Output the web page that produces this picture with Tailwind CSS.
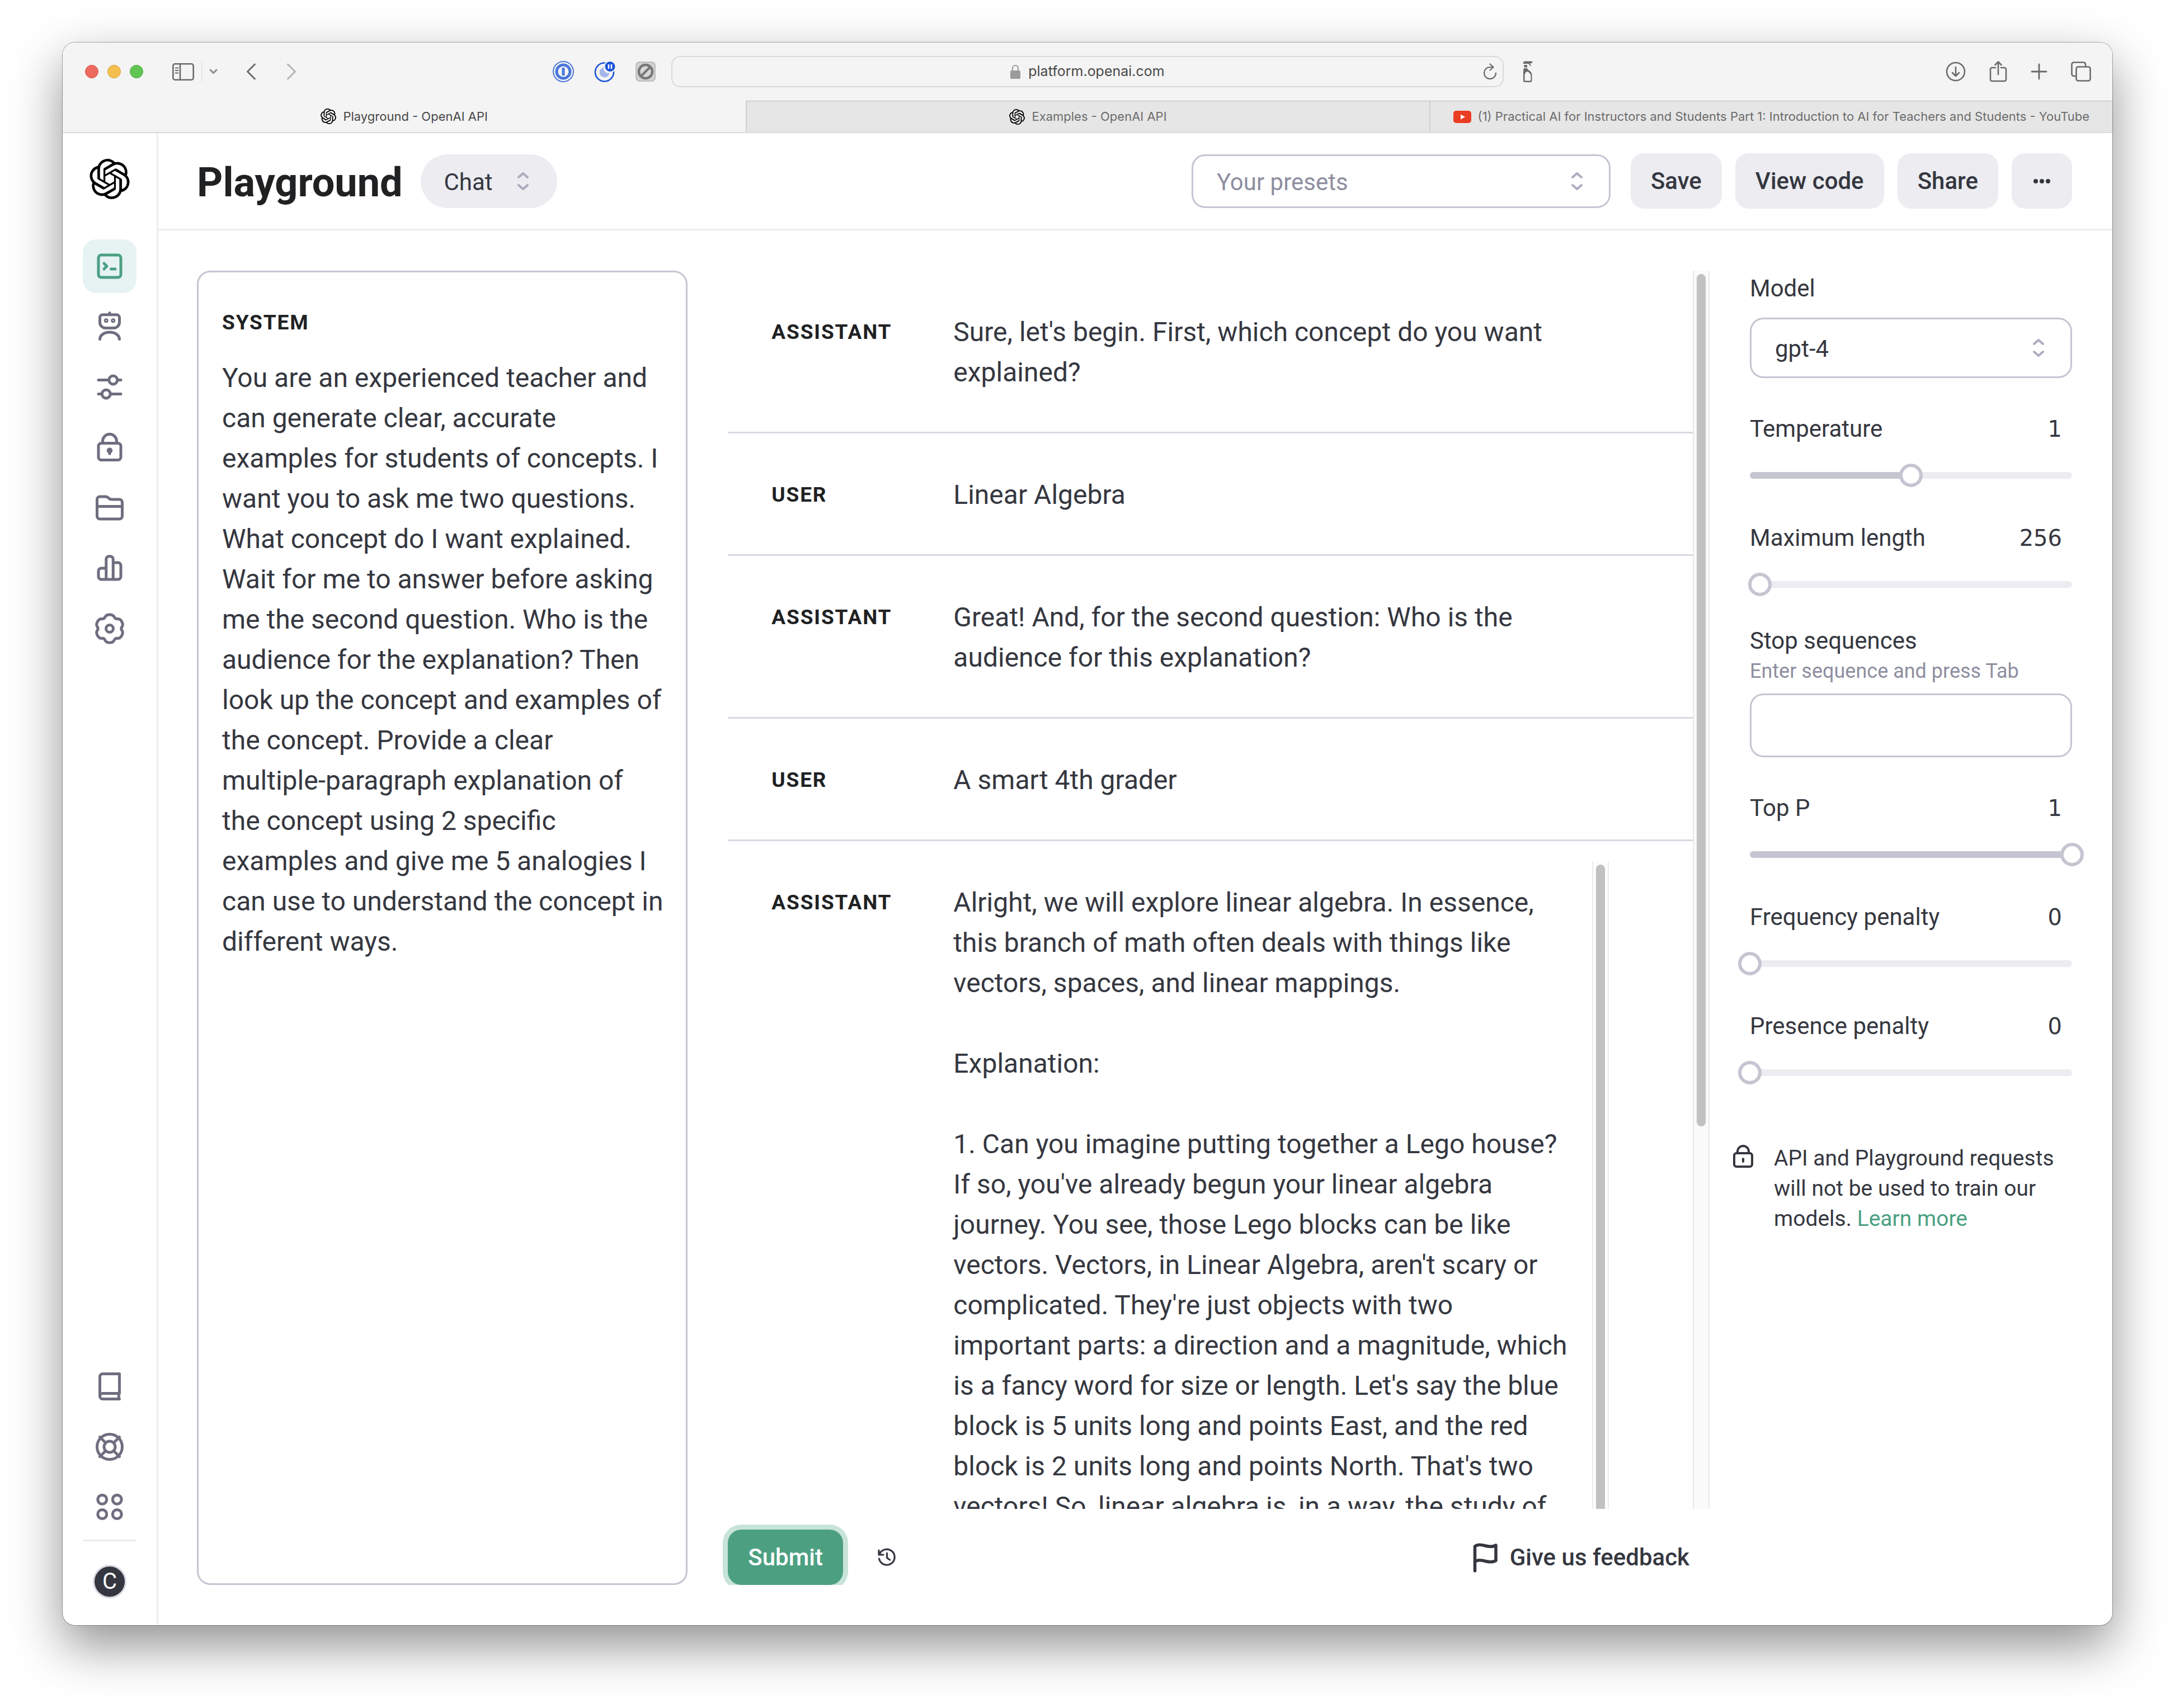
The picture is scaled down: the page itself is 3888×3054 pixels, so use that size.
<!DOCTYPE html>
<html lang="en">
<head>
<meta charset="utf-8">
<meta name="viewport" content="width=device-width, initial-scale=1">
<title>Playground - OpenAI API</title>
<script src="https://cdn.jsdelivr.net/npm/@tailwindcss/browser@4"></script>
</head>
<body class="bg-white font-['Roboto',sans-serif] text-[#353740]">

<!-- Shared icon shapes -->
<svg class="hidden" aria-hidden="true">
  <symbol id="openai" viewBox="0 0 24 24"><path fill="currentColor" d="M22.2819 9.8211a5.9847 5.9847 0 0 0-.5157-4.9108 6.0462 6.0462 0 0 0-6.5098-2.9A6.0651 6.0651 0 0 0 4.9807 4.1818a5.9847 5.9847 0 0 0-3.9977 2.9 6.0462 6.0462 0 0 0 .7427 7.0966 5.98 5.98 0 0 0 .511 4.9107 6.051 6.051 0 0 0 6.5146 2.9001A5.9847 5.9847 0 0 0 13.2599 24a6.0557 6.0557 0 0 0 5.7718-4.2058 5.9894 5.9894 0 0 0 3.9977-2.9001 6.0557 6.0557 0 0 0-.7475-7.0729zm-9.022 12.6081a4.4755 4.4755 0 0 1-2.8764-1.0408l.1419-.0804 4.7783-2.7582a.7948.7948 0 0 0 .3927-.6813v-6.7369l2.02 1.1686a.071.071 0 0 1 .038.052v5.5826a4.504 4.504 0 0 1-4.4945 4.4944zm-9.6607-4.1254a4.4708 4.4708 0 0 1-.5346-3.0137l.142.0852 4.783 2.7582a.7712.7712 0 0 0 .7806 0l5.8428-3.3685v2.3324a.0804.0804 0 0 1-.0332.0615L9.74 19.9502a4.4992 4.4992 0 0 1-6.1408-1.6464zM2.3408 7.8956a4.485 4.485 0 0 1 2.3655-1.9728V11.6a.7664.7664 0 0 0 .3879.6765l5.8144 3.3543-2.0201 1.1685a.0757.0757 0 0 1-.071 0l-4.8303-2.7865A4.504 4.504 0 0 1 2.3408 7.872zm16.5963 3.8558L13.1038 8.364 15.1192 7.2a.0757.0757 0 0 1 .071 0l4.8303 2.7913a4.4944 4.4944 0 0 1-.6765 8.1042v-5.6772a.79.79 0 0 0-.407-.667zm2.0107-3.0231l-.142-.0852-4.7735-2.7818a.7759.7759 0 0 0-.7854 0L9.409 9.2297V6.8974a.0662.0662 0 0 1 .0284-.0615l4.8303-2.7866a4.4992 4.4992 0 0 1 6.6802 4.66zM8.3065 12.863l-2.02-1.1638a.0804.0804 0 0 1-.038-.0567V6.0742a4.4992 4.4992 0 0 1 7.3757-3.4537l-.142.0805L8.704 5.459a.7948.7948 0 0 0-.3927.6813zm1.0976-2.3654l2.602-1.4998 2.6069 1.4998v2.9994l-2.5974 1.4997-2.6067-1.4997Z"/></symbol>
  <symbol id="updown" viewBox="0 0 24 32"><path fill="none" stroke="currentColor" stroke-width="4" stroke-linecap="round" stroke-linejoin="round" d="M4 9l8-7 8 7M4 23l8 7 8-7"/></symbol>
  <symbol id="lock" viewBox="0 0 24 24"><g fill="none" stroke="currentColor" stroke-width="2" stroke-linecap="round" stroke-linejoin="round"><rect x="4" y="9" width="16" height="12" rx="2"/><path d="M7 9V7.500a5 5 0 0 1 10 0V9M12 14.500v2"/></g><circle cx="12" cy="14.200" r="1.100" fill="currentColor"/></symbol>
</svg>

<div class="flex h-screen flex-col px-28 pt-[76px] pb-[148px]">
<div class="flex min-h-0 flex-1 flex-col overflow-hidden rounded-[22px] bg-white shadow-[0_0_0_1px_rgba(0,0,0,0.3),0_36px_90px_rgba(0,0,0,0.44)]">

  <!-- Browser toolbar -->
  <header class="grid h-[104px] shrink-0 grid-cols-[1088fr_1488fr_1088fr] items-center bg-[#f4f4f4] text-[#6a6a6a]">
    <div class="flex items-center pr-7 pl-10">
      <div class="flex gap-4">
        <button aria-label="Close" class="size-6 rounded-full border border-[#d9584b] bg-[#ed6a5e]"></button>
        <button aria-label="Minimize" class="size-6 rounded-full border border-[#d8a03c] bg-[#f5bf4f]"></button>
        <button aria-label="Zoom" class="size-6 rounded-full border border-[#51ab41] bg-[#61c554]"></button>
      </div>
      <button aria-label="Sidebar" class="ml-13"><svg class="h-[31px] w-[39px]" viewBox="0 0 39 31" fill="none" stroke="currentColor" stroke-width="2.6"><rect x="1.3" y="1.3" width="36.4" height="28.4" rx="3.5"/><path d="M14 1v29"/><path stroke-width="1.8" stroke-linecap="round" d="M5.5 8.5h5M5.5 13h5M5.5 17.5h5"/></svg></button>
      <div class="ml-[13px] h-9 w-0.5 bg-[#e4e4e4]"></div>
      <button aria-label="Sidebar options" class="ml-3"><svg class="h-[10px] w-[15px]" viewBox="0 0 15 10" fill="none" stroke="#8b8b90" stroke-width="3" stroke-linecap="round" stroke-linejoin="round"><path d="M2 2l5.5 5.5L13 2"/></svg></button>
      <button aria-label="Back" class="ml-[51px]"><svg class="h-[30px] w-[18px]" viewBox="0 0 18 30" fill="none" stroke="currentColor" stroke-width="3" stroke-linecap="round" stroke-linejoin="round"><path d="M15.500 2L2.500 15l13 13"/></svg></button>
      <button aria-label="Forward" class="ml-[54px]"><svg class="h-[30px] w-[18px]" viewBox="0 0 18 30" fill="none" stroke="#b4b4b4" stroke-width="3" stroke-linecap="round" stroke-linejoin="round"><path d="M2.500 2l13 13-13 13"/></svg></button>
      <div class="ml-auto flex items-center gap-9">
        <button aria-label="Password manager"><svg class="size-[38px]" viewBox="0 0 38 38"><circle cx="19" cy="19" r="18" fill="none" stroke="#4a76dd" stroke-width="2"/><circle cx="19" cy="19" r="12" fill="none" stroke="#4a76dd" stroke-width="5"/><rect x="16.500" y="12" width="5" height="14" fill="#4a76dd"/></svg></button>
        <button aria-label="Dark mode"><svg class="size-[38px]" viewBox="0 0 38 38"><circle cx="18.500" cy="20" r="16.500" fill="none" stroke="#1b53d8" stroke-width="2.600"/><path d="M17 11.500a9 9 0 1 0 10.500 10.500a9.500 9.500 0 0 1-10.500-10.500z" fill="#a3b7ea"/><circle cx="28.500" cy="10" r="11" fill="#f4f4f4"/><circle cx="28.500" cy="10" r="9" fill="#1b53d8"/><path d="M26 6v8M31 6v8" stroke="#fff" stroke-width="2.600"/></svg></button>
        <button aria-label="Content blocker"><svg class="size-[36px]" viewBox="0 0 36 36"><rect x="1" y="1" width="34" height="34" rx="6" fill="#d2d2d2" stroke="#b0b0b0" stroke-width="1.500"/><circle cx="18" cy="18" r="12" fill="#d8d8d8" stroke="#777" stroke-width="4.500"/><path d="M10 26L26 10" stroke="#777" stroke-width="4.500"/></svg></button>
      </div>
    </div>
    <div class="flex h-14 items-center rounded-[16px] border-2 border-[#d9d9d9] px-2.5">
      <div class="w-6"></div>
      <label class="flex flex-1 items-center justify-center gap-3.5">
        <svg class="h-[26px] w-[18px]" viewBox="0 0 18 26"><rect y="11" width="18" height="15" rx="2.500" fill="#9b9b9b"/><path d="M4 12V7a5 5 0 0 1 10 0v5" fill="none" stroke="#9b9b9b" stroke-width="2.200"/></svg>
        <input type="text" aria-label="Address" value="platform.openai.com" class="field-sizing-content font-['Inter',sans-serif] text-[25px] text-[#484848] outline-none">
      </label>
      <button aria-label="Reload"><svg class="h-[30px] w-6" viewBox="0 0 24 30" fill="none" stroke="currentColor" stroke-width="2.200" stroke-linecap="round" stroke-linejoin="round"><path d="M22 17.500a10.500 10.500 0 1 1-10.500-10.500h5M11.500 1.500l6 5.500-6 5.500"/></svg></button>
    </div>
    <div class="flex items-center justify-between pr-[38px] pl-8">
      <button aria-label="Cleaner"><svg class="h-[38px] w-[22px]" viewBox="0 0 22 38" fill="currentColor"><path d="M3 3q0-2 3-2.500h13v3.500h-4l2 5h-1.500l-3-4H3zM4.500 7H10v4.500H4.500z"/><path fill-rule="evenodd" d="M4.500 13H10c0 3 8.500 5 8.500 12v10q0 3-3 3H6q-3 0-3-3V16zM7 21q-1.500 2-1.500 5v8q0 1.500 1.500 1.500h8q1.500 0 1.500-1.500v-7c0-3-2-6-5-7.500-2-.6-3.500 0-4.500 1.500z"/></svg></button>
      <div class="flex items-center gap-[42px]">
        <button aria-label="Downloads"><svg class="size-9" viewBox="0 0 36 36" fill="none" stroke="currentColor" stroke-width="2.600" stroke-linecap="round" stroke-linejoin="round"><circle cx="18" cy="18" r="16"/><path d="M18 10v16M12 20l6 6 6-6"/></svg></button>
        <button aria-label="Share"><svg class="h-[40px] w-[32px]" viewBox="0 0 32 40" fill="none" stroke="currentColor" stroke-width="2.600" stroke-linecap="round" stroke-linejoin="round"><path d="M11 13H5a3 3 0 0 0-3 3v18a3 3 0 0 0 3 3h22a3 3 0 0 0 3-3V16a3 3 0 0 0-3-3h-6M16 25V2.500M10.500 8L16 2.500 21.500 8"/></svg></button>
        <button aria-label="New tab"><svg class="size-[30px]" viewBox="0 0 30 30" fill="none" stroke="currentColor" stroke-width="2.800" stroke-linecap="round"><path d="M15 2v26M2 15h26"/></svg></button>
        <button aria-label="Tab overview"><svg class="size-9" viewBox="0 0 36 36" fill="none" stroke="currentColor" stroke-width="2.600" stroke-linejoin="round"><path d="M10 26H5a3.500 3.500 0 0 1-3.500-3.500V5A3.500 3.500 0 0 1 5 1.500h17.500A3.500 3.500 0 0 1 26 5v4.500"/><rect x="9.500" y="9.500" width="25" height="25" rx="3.500"/></svg></button>
      </div>
    </div>
  </header>

  <!-- Browser tabs -->
  <nav class="grid h-[58px] shrink-0 grid-cols-3 border-b-2 border-[#d9dadb] bg-[#f4f4f4] font-['Inter',sans-serif] text-[22px] whitespace-nowrap text-[#6c6c6c]">
    <a href="#" class="flex items-center justify-center gap-3 text-[#484848]"><svg class="size-7 text-black"><use href="#openai"/></svg>Playground - OpenAI API</a>
    <a href="#" class="flex items-center justify-center gap-3 border-t border-l-2 border-t-[#b9b9b9] border-l-[#d0d0d0] bg-[#e6e6e6]"><svg class="size-7 text-black"><use href="#openai"/></svg>Examples - OpenAI API</a>
    <a href="#" class="flex items-center justify-center gap-3 border-t border-l-2 border-t-[#b9b9b9] border-l-[#d0d0d0] bg-[#e6e6e6]"><svg class="h-[22px] w-8" viewBox="0 0 32 22"><rect width="32" height="22" rx="5" fill="#ea3d23"/><path d="M13 6.500v9l8-4.500z" fill="#fff"/></svg>(1) Practical AI for Instructors and Students Part 1: Introduction to AI for Teachers and Students - YouTube</a>
  </nav>

  <div class="flex min-h-0 flex-1">
    <!-- Side navigation -->
    <aside class="flex w-[171px] shrink-0 flex-col items-center border-r-3 border-[#ececf1] pt-[46px] pb-12 text-[#6e6e80]">
      <a href="#" aria-label="OpenAI"><svg class="size-[72px] text-black"><use href="#openai"/></svg></a>
      <nav class="mt-[72px] flex flex-col gap-3 [&_svg]:size-[60px] [&_svg]:fill-none [&_svg]:stroke-current [&_svg]:stroke-2">
        <a href="#" aria-label="Playground" class="flex size-24 items-center justify-center rounded-3xl bg-[#e6f3f2] text-[#4ba082]"><svg viewBox="0 0 24 24" stroke-linecap="round" stroke-linejoin="round"><rect x="4" y="4" width="16" height="16" rx="2"/><path d="M8 10l2 2-2 2M13 14h3"/></svg></a>
        <a href="#" aria-label="Assistants" class="flex size-24 items-center justify-center"><svg viewBox="0 0 24 24" stroke-linecap="round" stroke-linejoin="round"><path d="M5 5.500a2 2 0 0 1 2-2h10a2 2 0 0 1 2 2v3.500a4 4 0 0 1-4 4H9a4 4 0 0 1-4-4zM12 3.500V2.200M5 21c0-2.800 3.100-5 7-5s7 2.200 7 5"/><circle cx="9.500" cy="7.700" r=".6"/><circle cx="14.500" cy="7.700" r=".6"/></svg></a>
        <a href="#" aria-label="Fine-tuning" class="flex size-24 items-center justify-center"><svg viewBox="0 0 24 24" stroke-linecap="round" stroke-linejoin="round"><circle cx="14.500" cy="7" r="3"/><circle cx="9.500" cy="17" r="3"/><path d="M4 7h7.500M17.500 7H20M4 17h2.500M12.500 17H20"/></svg></a>
        <a href="#" aria-label="API keys" class="flex size-24 items-center justify-center"><svg><use href="#lock"/></svg></a>
        <a href="#" aria-label="Files" class="flex size-24 items-center justify-center"><svg viewBox="0 0 24 24" stroke-linecap="round" stroke-linejoin="round"><path d="M3 18V6a2 2 0 0 1 2-2h4.200a2 2 0 0 1 1.200.400l1.200.900a3 3 0 0 0 1.800.700H19a2 2 0 0 1 2 2v10a2 2 0 0 1-2 2H5a2 2 0 0 1-2-2zM3 11h18"/></svg></a>
        <a href="#" aria-label="Usage" class="flex size-24 items-center justify-center"><svg viewBox="0 0 24 24" stroke-linecap="round" stroke-linejoin="round"><path d="M9.500 20V5.500a2 2 0 0 1 2-2h1a2 2 0 0 1 2 2V20M9.500 12H6a2 2 0 0 0-2 2v4a2 2 0 0 0 2 2h12a2 2 0 0 0 2-2V10a2 2 0 0 0-2-2h-3.500"/></svg></a>
        <a href="#" aria-label="Settings" class="flex size-24 items-center justify-center"><svg viewBox="0 0 24 24" stroke-linejoin="round"><path d="M12 2.010Q14.490 2.010 15.200 3.630Q15.900 5.250 17.660 5.050Q19.410 4.840 20.660 7Q21.900 9.160 20.850 10.580Q19.800 12 20.850 13.420Q21.900 14.840 20.660 17Q19.410 19.160 17.660 18.950Q15.900 18.750 15.200 20.370Q14.490 21.990 12 21.990Q9.510 21.990 8.800 20.370Q8.100 18.750 6.340 18.950Q4.590 19.160 3.340 17Q2.100 14.840 3.150 13.420Q4.200 12 3.150 10.580Q2.100 9.160 3.340 7Q4.590 4.840 6.340 5.050Q8.100 5.250 8.800 3.630Q9.510 2.010 12 2.010z"/><circle cx="12" cy="12" r="2.600"/></svg></a>
      </nav>
      <nav class="mt-auto flex flex-col gap-3 [&_svg]:size-[60px] [&_svg]:fill-none [&_svg]:stroke-current [&_svg]:stroke-2">
        <a href="#" aria-label="Documentation" class="flex size-24 items-center justify-center"><svg viewBox="0 0 24 24" stroke-linecap="round" stroke-linejoin="round"><path d="M19 21H7a2 2 0 0 1-2-2V5a2 2 0 0 1 2-2h12v14H7a2 2 0 0 0-2 2M18.500 17v4"/></svg></a>
        <a href="#" aria-label="Help" class="flex size-24 items-center justify-center"><svg viewBox="0 0 24 24" stroke-linecap="round"><circle cx="12" cy="12" r="9"/><circle cx="12" cy="12" r="4"/><path d="M5 5l4 4M19 5l-4 4M5 19l4-4M19 19l-4-4"/></svg></a>
        <a href="#" aria-label="All products" class="flex size-24 items-center justify-center"><svg viewBox="0 0 24 24"><circle cx="6.700" cy="6.500" r="3.200"/><circle cx="17.300" cy="6.500" r="3.200"/><circle cx="6.700" cy="17" r="3.200"/><circle cx="17.300" cy="17" r="3.200"/></svg></a>
      </nav>
      <div class="mt-2.5 h-[3px] w-24 bg-[#ececf1]"></div>
      <button class="mt-[42px] flex size-[60px] items-center justify-center rounded-full border-3 border-[#d9d9e3] bg-[#353740] text-[40px] leading-none text-white">C</button>
    </aside>

    <div class="flex min-w-0 flex-1 flex-col">
      <!-- Page header -->
      <div class="flex h-[174px] shrink-0 items-center border-b-3 border-[#ececf1] pr-[72px] pl-[69px] text-[42px]">
        <h1 class="pt-1.5 text-[72px] leading-[84px] font-bold text-[#202123]">Playground</h1>
        <div class="ml-8 grid h-24 w-[244px] items-center rounded-full bg-[#ececf1]">
          <select aria-label="Mode" class="col-start-1 row-start-1 h-full appearance-none pt-1 pl-[42px]"><option>Chat</option></select>
          <svg class="pointer-events-none col-start-1 row-start-1 mr-[49px] h-8 w-6 justify-self-end text-[#acacbe]"><use href="#updown"/></svg>
        </div>
        <div class="ml-auto grid h-24 w-[749px] items-center rounded-3xl border-3 border-[#c5c5d2] text-[#8e8ea0]">
          <select aria-label="Your presets" class="col-start-1 row-start-1 h-full appearance-none pt-1 pl-[42px]"><option>Your presets</option></select>
          <svg class="pointer-events-none col-start-1 row-start-1 mr-[45px] h-8 w-6 justify-self-end text-[#acacbe]"><use href="#updown"/></svg>
        </div>
        <div class="ml-9 flex gap-6 font-medium">
          <button class="h-[99px] rounded-3xl bg-[#ececf1] px-9">Save</button>
          <button class="h-[99px] rounded-3xl bg-[#ececf1] px-9">View code</button>
          <button class="h-[99px] rounded-3xl bg-[#ececf1] px-9">Share</button>
          <button aria-label="More" class="flex h-[99px] w-[108px] items-center justify-center rounded-3xl bg-[#ececf1]"><svg class="h-2 w-[30px]" viewBox="0 0 30 8" fill="currentColor"><circle cx="4" cy="4" r="4"/><circle cx="15" cy="4" r="4"/><circle cx="26" cy="4" r="4"/></svg></button>
        </div>
      </div>

      <main class="grid min-h-0 flex-1 grid-cols-[1fr_2fr_576px] grid-rows-[minmax(0,1fr)] gap-[72px] py-[72px] pr-[72px] pl-[69px]">
        <!-- System prompt -->
        <label class="flex flex-col rounded-3xl border-3 border-[#c5c5d2] pt-[69px] pl-[42px]">
          <span class="text-[37px] leading-[42px] font-bold tracking-wider text-[#202123]">SYSTEM</span>
          <textarea class="mt-[42px] flex-1 resize-none overflow-hidden text-[48px] leading-[72px] whitespace-pre outline-none">You are an experienced teacher and
can generate clear, accurate
examples for students of concepts. I
want you to ask me two questions.
What concept do I want explained.
Wait for me to answer before asking
me the second question. Who is the
audience for the explanation? Then
look up the concept and examples of
the concept. Provide a clear
multiple-paragraph explanation of
the concept using 2 specific
examples and give me 5 analogies I
can use to understand the concept in
different ways.</textarea>
        </label>

        <!-- Conversation -->
        <section class="flex min-h-0 flex-col">
          <div class="flex min-h-0 flex-1 overflow-hidden">
            <div class="flex-1 divide-y-3 divide-[#d9d9e3] text-[48px] leading-[72px]">
              <div class="flex py-9">
                <button class="w-[367px] shrink-0 self-start pt-[38px] pl-[78px] text-left text-[37px] leading-[72px] font-bold tracking-wider text-[#202123]">ASSISTANT</button>
                <textarea aria-label="Assistant message" rows="2" class="box-content flex-1 resize-none overflow-hidden px-9 pt-[38px] pb-[34px] whitespace-pre outline-none">Sure, let's begin. First, which concept do you want
explained?</textarea>
              </div>
              <div class="flex py-9">
                <button class="w-[367px] shrink-0 self-start pt-[38px] pl-[78px] text-left text-[37px] leading-[72px] font-bold tracking-wider text-[#202123]">USER</button>
                <textarea aria-label="User message" rows="1" class="box-content flex-1 resize-none overflow-hidden px-9 pt-[38px] pb-[34px] whitespace-pre outline-none">Linear Algebra</textarea>
              </div>
              <div class="flex py-9">
                <button class="w-[367px] shrink-0 self-start pt-[38px] pl-[78px] text-left text-[37px] leading-[72px] font-bold tracking-wider text-[#202123]">ASSISTANT</button>
                <textarea aria-label="Assistant message" rows="2" class="box-content flex-1 resize-none overflow-hidden px-9 pt-[38px] pb-[34px] whitespace-pre outline-none">Great! And, for the second question: Who is the
audience for this explanation?</textarea>
              </div>
              <div class="flex py-9">
                <button class="w-[367px] shrink-0 self-start pt-[38px] pl-[78px] text-left text-[37px] leading-[72px] font-bold tracking-wider text-[#202123]">USER</button>
                <textarea aria-label="User message" rows="1" class="box-content flex-1 resize-none overflow-hidden px-9 pt-[38px] pb-[34px] whitespace-pre outline-none">A smart 4th grader</textarea>
              </div>
              <div class="flex py-9 pr-[150px]">
                <button class="w-[367px] shrink-0 self-start pt-[38px] pl-[78px] text-left text-[37px] leading-[72px] font-bold tracking-wider text-[#202123]">ASSISTANT</button>
                <textarea aria-label="Assistant message" rows="17" class="box-content flex-1 resize-none overflow-hidden pt-[38px] pb-[34px] pl-9 whitespace-pre outline-none">Alright, we will explore linear algebra. In essence,
this branch of math often deals with things like
vectors, spaces, and linear mappings.

Explanation:

1. Can you imagine putting together a Lego house?
If so, you've already begun your linear algebra
journey. You see, those Lego blocks can be like
vectors. Vectors, in Linear Algebra, aren't scary or
complicated. They're just objects with two
important parts: a direction and a magnitude, which
is a fancy word for size or length. Let's say the blue
block is 5 units long and points East, and the red
block is 2 units long and points North. That's two
vectors! So, linear algebra is, in a way, the study of</textarea>
                <div class="flex w-[30px] shrink-0 justify-center border-x-2 border-[#ebebeb] bg-[#fdfdfd] pt-1.5"><div class="w-4 rounded-full bg-[#c1c1c1]"></div></div>
              </div>
            </div>
            <div class="flex w-[30px] shrink-0 justify-center border-x-2 border-[#e8e8e8] bg-[#fafafa] pt-1.5"><div class="h-[69%] w-4 rounded-full bg-[#c1c1c1]"></div></div>
          </div>
          <div class="-ml-[9px] flex items-center overflow-hidden pt-[37px] pr-9 pl-[9px] text-[42px] font-medium">
            <button class="h-[99px] rounded-3xl bg-[#4ca081] px-9 text-white ring-9 ring-[#c8e3d8]">Submit</button>
            <button aria-label="History" class="ml-[60px]"><svg class="size-9" viewBox="0 0 36 36" fill="none" stroke="currentColor" stroke-width="3.200" stroke-linecap="round" stroke-linejoin="round"><path d="M5 12.500A14 14 0 1 1 4.500 20M4 5v8h8M18.500 10v8.500l5 3.500"/></svg></button>
            <button class="ml-auto flex items-center gap-[15px]"><svg class="size-[60px]" viewBox="0 0 24 24" fill="none" stroke="currentColor" stroke-width="2.200" stroke-linecap="round" stroke-linejoin="round"><path d="M5 21.500V4c4.500-3.200 9.500 2.200 15-.8v11c-5.500 3-10.500-2.400-15 .8"/></svg>Give us feedback</button>
          </div>
        </section>

        <!-- Model settings -->
        <aside class="flex flex-col pt-[5px] text-[42px] leading-[54px]">
          <label for="model">Model</label>
          <div class="mt-[25px] grid h-[108px] items-center rounded-3xl border-3 border-[#c5c5d2]">
            <select id="model" class="col-start-1 row-start-1 h-full appearance-none pt-1 pl-[42px]"><option>gpt-4</option></select>
            <svg class="pointer-events-none col-start-1 row-start-1 mr-[45px] h-8 w-6 justify-self-end text-[#acacbe]"><use href="#updown"/></svg>
          </div>

          <div class="mt-16 flex justify-between pr-[18px]"><label for="temperature">Temperature</label><output for="temperature" class="font-['DejaVu_Sans',sans-serif] text-[40px]">1</output></div>
          <div class="mt-[35px] grid items-center">
            <div class="col-start-1 row-start-1 h-3 rounded-full bg-[#ececf1]"><div class="h-3 rounded-full bg-[#c5c5d2]" style="width:50%"></div></div>
            <input id="temperature" type="range" min="0" max="2" step="0.01" value="1" class="col-start-1 row-start-1 -ml-[21px] h-[42px] w-[calc(100%+42px)] appearance-none bg-transparent [&::-webkit-slider-thumb]:size-[42px] [&::-webkit-slider-thumb]:appearance-none [&::-webkit-slider-thumb]:rounded-full [&::-webkit-slider-thumb]:border-6 [&::-webkit-slider-thumb]:border-solid [&::-webkit-slider-thumb]:border-[#c5c5d2] [&::-webkit-slider-thumb]:bg-white">
          </div>

          <div class="mt-16 flex justify-between pr-[18px]"><label for="length">Maximum length</label><output for="length" class="font-['DejaVu_Sans',sans-serif] text-[40px]">256</output></div>
          <div class="mt-[35px] grid items-center">
            <div class="col-start-1 row-start-1 h-3 rounded-full bg-[#ececf1]"><div class="h-3 rounded-full bg-[#c5c5d2]" style="width:3%"></div></div>
            <input id="length" type="range" min="0" max="8192" value="256" class="col-start-1 row-start-1 -ml-[21px] h-[42px] w-[calc(100%+42px)] appearance-none bg-transparent [&::-webkit-slider-thumb]:size-[42px] [&::-webkit-slider-thumb]:appearance-none [&::-webkit-slider-thumb]:rounded-full [&::-webkit-slider-thumb]:border-6 [&::-webkit-slider-thumb]:border-solid [&::-webkit-slider-thumb]:border-[#c5c5d2] [&::-webkit-slider-thumb]:bg-white">
          </div>

          <label for="stop" class="mt-[53px]">Stop sequences</label>
          <p class="text-[36px] text-[#8e8ea0]">Enter sequence and press Tab</p>
          <input id="stop" type="text" class="mt-[13px] h-[114px] rounded-3xl border-3 border-[#c5c5d2] px-[42px] outline-none">

          <div class="mt-16 flex justify-between pr-[18px]"><label for="topp">Top P</label><output for="topp" class="font-['DejaVu_Sans',sans-serif] text-[40px]">1</output></div>
          <div class="mt-[35px] grid items-center">
            <div class="col-start-1 row-start-1 h-3 rounded-full bg-[#c5c5d2]"></div>
            <input id="topp" type="range" min="0" max="1" step="0.01" value="1" class="col-start-1 row-start-1 -ml-[21px] h-[42px] w-[calc(100%+42px)] appearance-none bg-transparent [&::-webkit-slider-thumb]:size-[42px] [&::-webkit-slider-thumb]:appearance-none [&::-webkit-slider-thumb]:rounded-full [&::-webkit-slider-thumb]:border-6 [&::-webkit-slider-thumb]:border-solid [&::-webkit-slider-thumb]:border-[#c5c5d2] [&::-webkit-slider-thumb]:bg-white">
          </div>

          <div class="mt-16 flex justify-between pr-[18px]"><label for="frequency">Frequency penalty</label><output for="frequency" class="font-['DejaVu_Sans',sans-serif] text-[40px]">0</output></div>
          <div class="mt-[35px] grid items-center">
            <div class="col-start-1 row-start-1 h-3 rounded-full bg-[#ececf1]"></div>
            <input id="frequency" type="range" min="0" max="2" step="0.01" value="0" class="col-start-1 row-start-1 -ml-[21px] h-[42px] w-[calc(100%+42px)] appearance-none bg-transparent [&::-webkit-slider-thumb]:size-[42px] [&::-webkit-slider-thumb]:appearance-none [&::-webkit-slider-thumb]:rounded-full [&::-webkit-slider-thumb]:border-6 [&::-webkit-slider-thumb]:border-solid [&::-webkit-slider-thumb]:border-[#c5c5d2] [&::-webkit-slider-thumb]:bg-white">
          </div>

          <div class="mt-16 flex justify-between pr-[18px]"><label for="presence">Presence penalty</label><output for="presence" class="font-['DejaVu_Sans',sans-serif] text-[40px]">0</output></div>
          <div class="mt-[35px] grid items-center">
            <div class="col-start-1 row-start-1 h-3 rounded-full bg-[#ececf1]"></div>
            <input id="presence" type="range" min="0" max="2" step="0.01" value="0" class="col-start-1 row-start-1 -ml-[21px] h-[42px] w-[calc(100%+42px)] appearance-none bg-transparent [&::-webkit-slider-thumb]:size-[42px] [&::-webkit-slider-thumb]:appearance-none [&::-webkit-slider-thumb]:rounded-full [&::-webkit-slider-thumb]:border-6 [&::-webkit-slider-thumb]:border-solid [&::-webkit-slider-thumb]:border-[#c5c5d2] [&::-webkit-slider-thumb]:bg-white">
          </div>

          <div class="mt-[105px] -ml-9 flex gap-[31px] text-[39px]">
            <svg class="size-12 shrink-0"><use href="#lock"/></svg>
            <p>API and Playground requests<br>will not be used to train our<br>models. <a href="#" class="text-[#4ba082]">Learn more</a></p>
          </div>
        </aside>
      </main>
    </div>
  </div>
</div>
</div>
</body>
</html>
